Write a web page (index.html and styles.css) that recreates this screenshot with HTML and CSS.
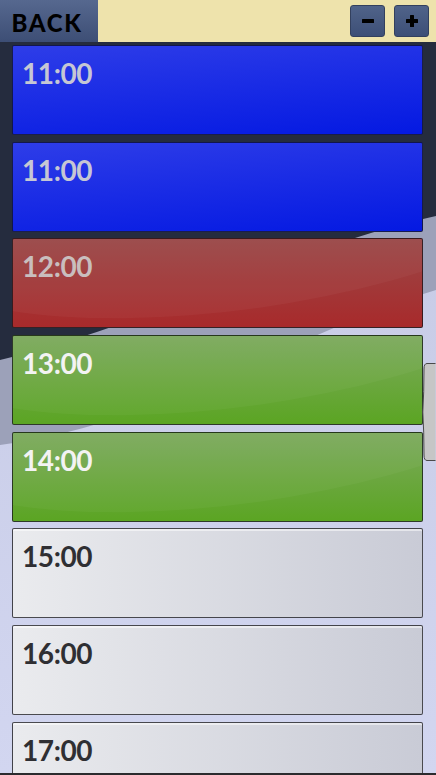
FILE: index.html
```html
<!DOCTYPE html>
<html>
<head>
<meta charset="utf-8">
<link rel="stylesheet" href="styles.css">
</head>
<body>
<div class="screen">
  <svg class="backdrop" width="436" height="775" viewBox="0 0 436 775">
    <defs>
      <linearGradient id="lav" x1="0" y1="0" x2="0" y2="1">
        <stop offset="0" stop-color="#c3c7e2"/>
        <stop offset="1" stop-color="#d2d6f0"/>
      </linearGradient>
    </defs>
    <rect width="436" height="775" fill="url(#lav)"/>
    <path d="M0,0 H436 V290 C300,330 160,425 0,445 Z" fill="#9ca1b9"/>
    <path d="M0,0 H436 V216 C300,245 150,325 0,360 Z" fill="#252c3e"/>
  </svg>

  <header class="topbar">
    <button class="back">BACK</button>
    <div class="zoom">
      <button class="zbtn" aria-label="zoom out">
        <svg width="12" height="4" viewBox="0 0 12 4"><rect width="12" height="4" rx="0.5" fill="#000"/></svg>
      </button>
      <button class="zbtn" aria-label="zoom in">
        <svg width="12" height="12" viewBox="0 0 12 12"><rect y="4" width="12" height="4" rx="0.5" fill="#000"/><rect x="4" width="4" height="12" rx="0.5" fill="#000"/></svg>
      </button>
    </div>
  </header>

  <main class="list">
    <div class="slot blue"><span class="time">11:00</span></div>
    <div class="slot blue"><span class="time">11:00</span></div>
    <div class="slot red"><span class="time">12:00</span></div>
    <div class="slot green"><span class="time">13:00</span></div>
    <div class="slot green"><span class="time">14:00</span></div>
    <div class="slot free"><span class="time">15:00</span></div>
    <div class="slot free"><span class="time">16:00</span></div>
    <div class="slot free"><span class="time">17:00</span></div>
  </main>

  <div class="bottomline"></div>

  <svg class="thumb" width="14" height="98" viewBox="0 0 14 98">
    <path d="M13.5,0.5 H5 Q2,0.5 2,6 Q2,30 0.8,49 Q2,68 2,92 Q2,97.5 5,97.5 H13.5" fill="#c6c6c6" stroke="#4a4a4a" stroke-width="1"/>
  </svg>
</div>
</body>
</html>
```

FILE: styles.css
```css
* { box-sizing: border-box; }
html, body { margin: 0; padding: 0; }
body {
  width: 436px;
  height: 775px;
  overflow: hidden;
  font-family: Lato, "Open Sans", sans-serif;
}
.screen {
  position: relative;
  width: 436px;
  height: 775px;
  display: flex;
  flex-direction: column;
  overflow: hidden;
}
.backdrop {
  position: absolute;
  left: 0;
  top: 0;
  z-index: 0;
}
.topbar {
  position: relative;
  z-index: 1;
  height: 42px;
  flex: none;
  display: flex;
  align-items: stretch;
  background: #eee3ac;
}
.back {
  width: 98px;
  border: none;
  margin: 0;
  padding: 2px 4px 0 0;
  background: linear-gradient(#56688f, #3d4e75);
  font-family: Lato, sans-serif;
  font-weight: 900;
  font-size: 24px;
  letter-spacing: 1.6px;
  color: #000;
  text-align: center;
}
.zoom {
  margin-left: auto;
  display: flex;
  gap: 9px;
  padding: 5px 7px 0 0;
}
.zbtn {
  width: 35px;
  height: 32px;
  margin: 0;
  padding: 0;
  border: 1px solid #33405e;
  border-radius: 3px;
  background: linear-gradient(#506389, #3d4f77);
  display: flex;
  align-items: center;
  justify-content: center;
}
.list {
  position: relative;
  z-index: 1;
  flex: 1;
  overflow: hidden;
  padding: 3px 13px 0 12px;
  display: flex;
  flex-direction: column;
  gap: 6.67px;
}
.slot {
  flex: none;
  height: 90px;
  border: 1px solid rgba(20, 20, 25, 0.75);
  border-radius: 2px;
  padding: 13px 0 0 9px;
  position: relative;
  overflow: hidden;
}
.time {
  position: relative;
  display: block;
  font-family: Lato, sans-serif;
  font-weight: 700;
  font-size: 28px;
  line-height: 28px;
  letter-spacing: -0.4px;
}
.blue {
  background: linear-gradient(175deg, #2e3de8, #0419e2);
}
.blue .time { color: #c6c7d4; }
.red {
  background: linear-gradient(#9a4848, #a82a2b);
}
.red .time { color: #c9bebe; }
.green {
  background: linear-gradient(#7da95e, #5ba523);
}
.green .time { color: #f3f3f3; }
.free {
  background: linear-gradient(90deg, #eaebee, #c9cbd6);
  box-shadow: inset 0 2px 0 rgba(255, 255, 255, 0.5);
}
.free .time { color: #2f2f33; }
.red::before, .green::before {
  content: "";
  position: absolute;
  left: -120px;
  top: -150px;
  width: 700px;
  height: 220px;
  border-radius: 50%;
  transform: rotate(-8deg);
  background: rgba(255, 255, 255, 0.035);
}
.bottomline {
  position: relative;
  z-index: 2;
  flex: none;
  height: 2px;
  background: #2b2b2e;
}
.thumb {
  position: absolute;
  z-index: 3;
  left: 422px;
  top: 363px;
}
```
